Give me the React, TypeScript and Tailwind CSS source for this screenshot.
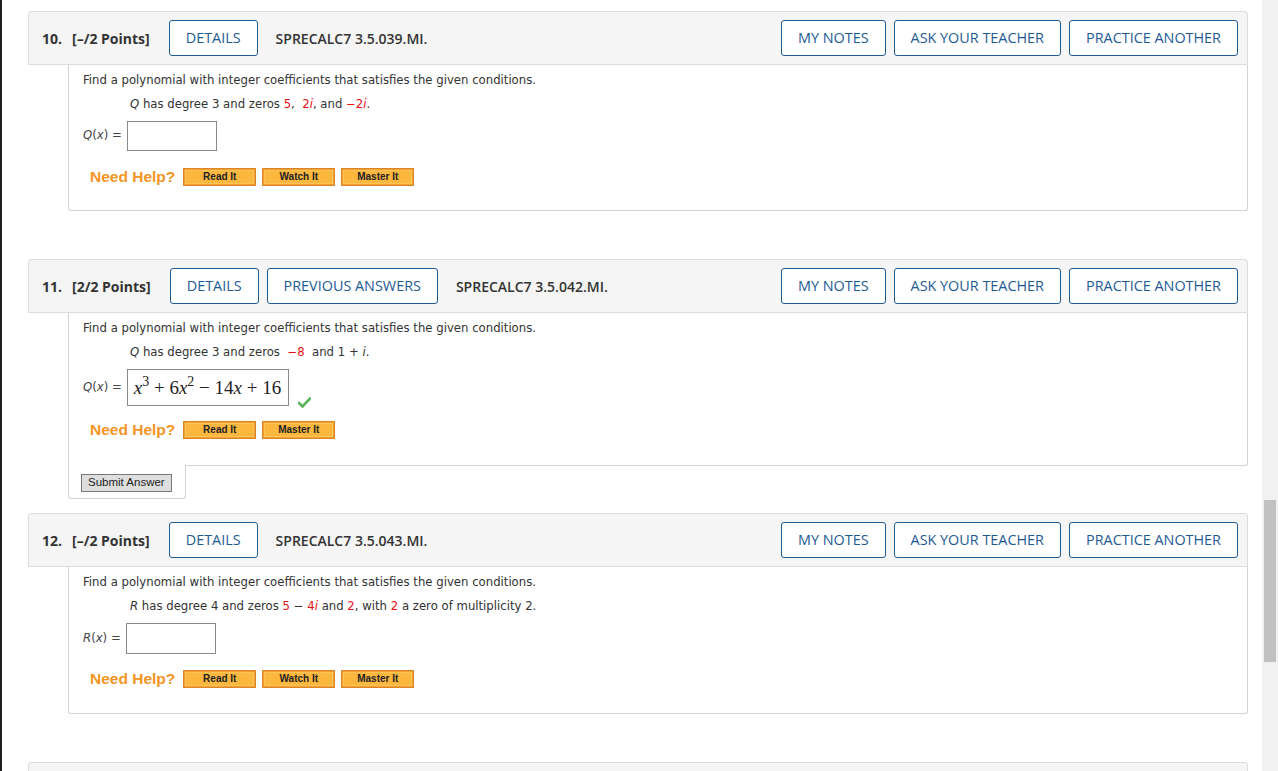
import type { ReactNode } from 'react';

const headFont = { fontFamily: '"Open Sans", "Liberation Sans", sans-serif' };
const bodyFont = { fontFamily: '"DejaVu Sans", Verdana, sans-serif' };
const arial = { fontFamily: '"Liberation Sans", Arial, sans-serif' };
const serif = { fontFamily: '"Liberation Serif", "Times New Roman", serif' };

function OutlineButton({ children }: { children: ReactNode }) {
  return (
    <button className="h-[36px] rounded-[3px] border border-[#1d5c95] bg-white px-[16px] text-[14.4px] font-medium uppercase text-[#1e5b94]">
      {children}
    </button>
  );
}

function Header({ num, points, tags, code }: { num: string; points: string; tags: string[]; code: string }) {
  return (
    <div
      className="flex h-[54px] items-center rounded-t-[3px] border border-[#dcdcdc] bg-[#f5f5f5] pl-[13px] pr-[9px] text-[14px] text-[#333]"
      style={headFont}
    >
      <span className="mr-[10px] font-bold">{num}</span>
      <span className="mr-[19px] font-bold">{points}</span>
      <div className="flex gap-2">
        {tags.map((t) => (
          <OutlineButton key={t}>{t}</OutlineButton>
        ))}
      </div>
      <span className="ml-[18px] font-semibold">{code}</span>
      <div className="ml-auto flex gap-2">
        <OutlineButton>My Notes</OutlineButton>
        <OutlineButton>Ask Your Teacher</OutlineButton>
        <OutlineButton>Practice Another</OutlineButton>
      </div>
    </div>
  );
}

function HelpButton({ label }: { label: string }) {
  return (
    <button
      className="flex h-[18px] w-[73px] items-center justify-center border border-[#dd8526] bg-[#fcb73f] text-[10px] font-bold leading-none text-[#222] shadow-[inset_0_0_0_1px_#f0a032,inset_0_0_0_2px_#ffc456]"
      style={arial}
    >
      {label}
    </button>
  );
}

function NeedHelp({ buttons, mt }: { buttons: string[]; mt: string }) {
  return (
    <div className={`ml-[7px] flex h-[24px] items-center ${mt}`}>
      <span className="mr-[8px] text-[15.5px] font-bold text-[#f39424]" style={arial}>
        Need Help?
      </span>
      <div className="flex gap-[6px]">
        {buttons.map((b) => (
          <HelpButton key={b} label={b} />
        ))}
      </div>
    </div>
  );
}

const R = ({ children }: { children: ReactNode }) => <span className="text-[#e8100f]">{children}</span>;

function Prompt({ children }: { children: ReactNode }) {
  return (
    <>
      <p className="h-[20px] leading-[20px]">Find a polynomial with integer coefficients that satisfies the given conditions.</p>
      <p className="ml-[47px] mt-[4px] h-[20px] leading-[20px]">{children}</p>
    </>
  );
}

function AnswerRow({ fn, children, w, h }: { fn: string; children?: ReactNode; w: number; h: string }) {
  return (
    <div className="mt-[7px] flex items-center">
      <span className="mr-[5px] text-[#444]">
        <i>{fn}</i>(<i>x</i>) =
      </span>
      <div className={`flex items-center border border-[#8a8a8a] bg-white ${h}`} style={{ width: w }}>
        {children}
      </div>
    </div>
  );
}

export default function App() {
  return (
    <div className="flex h-[771px] w-[1278px] overflow-hidden bg-white">
      <div className="w-[2px] shrink-0 bg-[#1e1e1e]" />
      <div className="flex-1 pl-[26px] pr-[14px] pt-[11px]">
        {/* 10 */}
        <Header num="10." points="[–/2 Points]" tags={['Details']} code="SPRECALC7 3.5.039.MI." />
        <div
          className="ml-[40px] rounded-b-[3px] border-x border-b border-[#d2d2d2] pb-[21px] pl-[14px] pt-[5px] text-[11.7px] text-[#333]"
          style={bodyFont}
        >
          <Prompt>
            <i>Q</i> has degree 3 and zeros <R>5</R>,&nbsp; <R>2<i>i</i></R>, and <R>−2<i>i</i></R>.
          </Prompt>
          <AnswerRow fn="Q" w={90} h="h-[30px]" />
          <NeedHelp mt="mt-[14px]" buttons={['Read It', 'Watch It', 'Master It']} />
        </div>

        {/* 11 */}
        <div className="mt-[48px]">
          <Header
            num="11."
            points="[2/2 Points]"
            tags={['Details', 'Previous Answers']}
            code="SPRECALC7 3.5.042.MI."
          />
          <div
            className="ml-[40px] rounded-br-[3px] border-x border-b border-[#d2d2d2] pb-[23px] pl-[14px] pt-[5px] text-[11.7px] text-[#333]"
            style={bodyFont}
          >
            <Prompt>
              <i>Q</i> has degree 3 and zeros&nbsp; <R>−8</R>&nbsp; and 1 + <i>i</i>.
            </Prompt>
            <div className="flex items-end">
              <AnswerRow fn="Q" w={162} h="h-[37px]">
                <span className="whitespace-nowrap pl-[6px] text-[19px] leading-none text-[#222]" style={serif}>
                  <i>x</i>
                  <span className="relative top-[-8px] text-[14px]">3</span> + 6<i>x</i>
                  <span className="relative top-[-8px] text-[14px]">2</span> − 14<i>x</i> + 16
                </span>
              </AnswerRow>
              <svg className="mb-[-2px] ml-[9px] shrink-0" width="13" height="11" viewBox="0 0 13 11">
                <path d="M1 6 L4.5 9.5 L12 1.5" fill="none" stroke="#5bb55b" strokeWidth="2.6" strokeLinecap="round" />
              </svg>
            </div>
            <NeedHelp mt="mt-[12px]" buttons={['Read It', 'Master It']} />
          </div>
          <div className="ml-[40px] -mt-px flex h-[34px] w-[118px] items-start rounded-b-[3px] border-x border-b border-[#d2d2d2] bg-white pl-[12px] pt-[9px]">
            <button
              className="h-[18px] border border-[#777] bg-[#dedede] px-[6px] text-[11.5px] leading-none text-[#222]"
              style={arial}
            >
              Submit Answer
            </button>
          </div>
        </div>

        {/* 12 */}
        <div className="mt-[14px]">
          <Header num="12." points="[–/2 Points]" tags={['Details']} code="SPRECALC7 3.5.043.MI." />
          <div
            className="ml-[40px] rounded-b-[3px] border-x border-b border-[#d2d2d2] pb-[22px] pl-[14px] pt-[5px] text-[11.7px] text-[#333]"
            style={bodyFont}
          >
            <Prompt>
              <i>R</i> has degree 4 and zeros <R>5</R> − <R>4<i>i</i></R> and <R>2</R>, with <R>2</R> a zero of
              multiplicity 2.
            </Prompt>
            <AnswerRow fn="R" w={90} h="h-[31px]" />
            <NeedHelp mt="mt-[13px]" buttons={['Read It', 'Watch It', 'Master It']} />
          </div>
        </div>

        <div className="mt-[48px] h-[20px] rounded-t-[3px] border border-[#dcdcdc] bg-[#f5f5f5]" />
      </div>
      <div className="flex w-[16px] shrink-0 flex-col bg-[#f1f1f1]">
        <div className="mx-[2px] mt-[500px] h-[162px] bg-[#c1c1c1]" />
      </div>
    </div>
  );
}
